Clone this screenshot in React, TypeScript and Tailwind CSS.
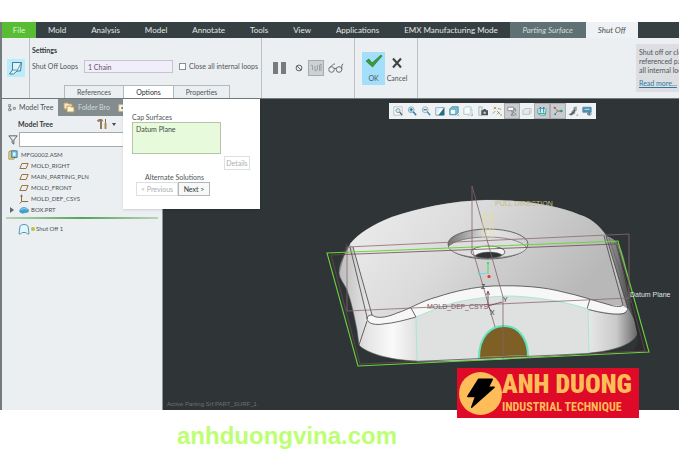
import { useState } from "react";
import type { ReactNode } from "react";
import clsx from "clsx";

const menus = ["Mold", "Analysis", "Model", "Annotate", "Tools", "View", "Applications", "EMX Manufacturing Mode"];
const panels = ["References", "Options", "Properties"];

type Node = { name: string; kind: "plane" | "csys" | "part"; expandable?: boolean };

const nodes: Node[] = [
  { name: "MOLD_RIGHT", kind: "plane" },
  { name: "MAIN_PARTING_PLN", kind: "plane" },
  { name: "MOLD_FRONT", kind: "plane" },
  { name: "MOLD_DEF_CSYS", kind: "csys" },
  { name: "BOX.PRT", kind: "part", expandable: true },
];

function Icon({ children, className = "size-3" }: { children: ReactNode; className?: string }) {
  return (
    <svg viewBox="0 0 12 12" className={clsx("shrink-0", className)} fill="none" stroke="#5b6266" strokeWidth="1" aria-hidden="true">
      {children}
    </svg>
  );
}

function NodeIcon({ kind }: { kind: Node["kind"] }) {
  if (kind === "plane") {
    return <Icon className="size-2.5"><path d="M3.500 3h7.500l-2.500 6H1z" stroke="#9b7440" strokeWidth="1.200" /></Icon>;
  }
  if (kind === "csys") {
    return <Icon className="size-2.5"><path d="M3 1v8h8M3 9L1 11.500M3 1L2 3M3 1l1 2" stroke="#8d6a3c" strokeWidth="1.200" /></Icon>;
  }
  return (
    <Icon className="size-2.5">
      <path d="M1 6c1-2 3-3 5-3s4 1 5.500 3L11 8.500 4 10 1 8.500z" fill="#3fa3d1" stroke="#2b7fa8" strokeWidth=".6" />
      <path d="M2 6c2-2 6-2.500 8-.5" stroke="#a5dcf2" />
    </Icon>
  );
}

const more = <path d="M10 11.500h1.500V10z" fill="#333" stroke="none" />;

const viewTools: { label: string; pressed?: boolean; art: ReactNode }[] = [
  {
    label: "Refit",
    art: <><path d="M1 1h10v10H1z" fill="#f8f8f8" stroke="#b4bbbe" /><circle cx="6" cy="5.500" r="2.500" fill="#cfe6f0" stroke="#7f97a2" /><path d="M8 7.500l3 3.500" strokeWidth="1.500" /></>,
  },
  {
    label: "Zoom In",
    art: <><circle cx="5" cy="4.500" r="3.500" fill="#d5ebf5" stroke="#8ba3b0" /><path d="M3 4.500h4M5 2.500v4" stroke="#1d6d96" strokeWidth="1.300" /><path d="M7.500 7l3.500 4" stroke="#2f7ba3" strokeWidth="1.700" /></>,
  },
  {
    label: "Zoom Out",
    art: <><circle cx="5" cy="4.500" r="3.500" fill="#e2eff5" stroke="#93a7b0" /><path d="M3 4.500h4" stroke="#1d6d96" strokeWidth="1.300" /><path d="M7.500 7l3.500 4" stroke="#4a8bad" strokeWidth="1.700" /></>,
  },
  {
    label: "Repaint",
    art: <><path d="M1 2h10v9H1z" fill="#fff" stroke="#6f919b" /><path d="M11 2L4 11h7z" fill="#1f6d8e" stroke="none" /><path d="M1.500 10.500L7 2H1.500z" fill="#d5edf5" stroke="none" /></>,
  },
  {
    label: "Display Style",
    art: <><path d="M1 3.500L3.500 1H11v7l-2.500 2.500H1z" fill="#7cc0da" stroke="#3b86a4" /><path d="M1.500 4h6.500v6H1.500z" fill="#f6fcfd" stroke="#3b86a4" strokeWidth=".7" />{more}</>,
  },
  {
    label: "Saved Orientations",
    art: <><path d="M1 3l2-2h6.500v7l-2 2H1z" fill="#f4fafc" stroke="#a3bfca" /><path d="M8 4h3v7H6" stroke="#91bccd" strokeDasharray="1 1" />{more}</>,
  },
  {
    label: "View Manager",
    art: <><path d="M1 1h4v10H1z" fill="#e5eaec" stroke="#a9afb2" /><path d="M4 5h2l1-1.500h2L10 5h2v6H4z" fill="#4b5356" stroke="none" /><circle cx="8" cy="8" r="1.500" fill="#bcc7cb" stroke="none" /></>,
  },
  {
    label: "Datum Display Filters",
    art: <><path d="M2 1l3 3M5 1L2 4M7 3l4 1M1 9l3-3M6 6l4 4M6 10l3-3" stroke="#a1874f" />{more}</>,
  },
  {
    label: "Annotation Display",
    pressed: true,
    art: <><path d="M1 1.500h7v4H1z" fill="#fff" stroke="#7f8487" /><path d="M8 3.500h2v3M5 7h3l-3 4h4M9 8l2 3" stroke="#555b5e" strokeWidth=".8" /></>,
  },
  {
    label: "Section Display",
    art: <><path d="M1 5l3-2h7v5l-2 2H1z" fill="#e6e8e9" stroke="#b8bcbe" /><path d="M9 5v5" stroke="#b8bcbe" /></>,
  },
  {
    label: "Shut Off Display",
    pressed: true,
    art: <><path d="M1 3v6l3 2h6l1-8" fill="#d3f0f0" stroke="#4690a6" /><path d="M4 8V2M2.500 3.500L4 1.500l1.500 2M8 8V2M6.500 3.500L8 1.500l1.500 2" stroke="#1976a0" /><path d="M2 9h8" stroke="#25a46e" /></>,
  },
  {
    label: "Spin Center",
    pressed: true,
    art: <><path d="M2 1.500L5.500 6 2 10.500" stroke="#c45757" /><path d="M5.500 6H11" stroke="#249254" strokeWidth="1.200" /><circle cx="2" cy="2" r="1.200" fill="#bd4747" stroke="none" /><circle cx="10" cy="6" r="1.500" fill="#359961" stroke="none" /><circle cx="2.500" cy="10" r="1.200" fill="#3f8cb5" stroke="none" /></>,
  },
  {
    label: "Appearance",
    art: <><path d="M1 10l3-1 1-3 2-1V2l3-1v4L8 7v2l-4 2z" fill="#a1a6a9" stroke="#777d80" strokeWidth=".7" /><path d="M3 10.500l4-3 1-3" stroke="#44494b" strokeWidth="1.300" />{more}</>,
  },
  {
    label: "Graphics Window",
    art: <><path d="M1 1.500h10v6H1z" fill="#4793b2" stroke="#5f889a" /><path d="M3 4h6" stroke="#e0f3fa" /><path d="M6 9.500c1.500-2 4-2 5.500 0-1.500 2-4 2-5.500 0z" fill="#fff" stroke="#28617a" strokeWidth=".8" /><circle cx="8.700" cy="9.500" r="1" fill="#194a60" stroke="none" /></>,
  },
];

function MenuBar() {
  return (
    <nav className="flex h-4 items-stretch bg-[#363f41] text-[8px] leading-4 text-[#e3e8e8]">
      <button className="w-[34px] bg-[#58bd35] text-[#dcf8c8]">File</button>
      <div className="flex gap-px">
        {menus.map((m) => (
          <button key={m} className="px-3 whitespace-nowrap">{m}</button>
        ))}
      </div>
      <button className="w-[76px] bg-[#5f7174] whitespace-nowrap text-[#d3dddd] italic">Parting Surface</button>
      <button className="w-[52px] bg-[#eff2f4] whitespace-nowrap text-[#4c5154] italic">Shut Off</button>
    </nav>
  );
}

function Ribbon({ panel, setPanel }: { panel: string; setPanel: (p: string) => void }) {
  const [closeAll, setCloseAll] = useState(false);
  return (
    <header className="flex overflow-hidden border-b border-[#73797b] bg-[#eceff2]">
      <div className="flex w-[28px] shrink-0 items-center justify-center border-r border-[#bcc1c4]">
        <button aria-label="Shut Off" className="flex size-[18px] items-center justify-center bg-[#b9edfa]">
          <svg viewBox="0 0 16 16" className="size-4" fill="none" stroke="#407f9b" aria-hidden="true">
            <path d="M4.500 2.500h9l-1 8.500H9l-3.500 3H1.500L4.500 10z" fill="#dff4fa" />
            <path d="M4.500 2.500V10H9M9 11L13 3" strokeWidth=".8" />
          </svg>
        </button>
      </div>

      <div className="flex w-[232px] shrink-0 flex-col border-r border-[#bcc1c4] pt-1.5">
        <h2 className="pl-0.5 text-[7px] leading-3 font-bold text-[#33383b]">Settings</h2>
        <div className="mt-1 flex h-[13px] items-center pl-0.5 text-[7px]">
          <label htmlFor="loops" className="w-[52px] whitespace-nowrap">Shut Off Loops</label>
          <input id="loops" defaultValue="1 Chain" className="h-[13px] w-[89px] border border-[#c4c5d0] bg-[#f2edfb] px-[3px] text-[#5d5268]" />
          <label className="ml-1.5 flex items-center gap-[3px] whitespace-nowrap">
            <input
              type="checkbox"
              checked={closeAll}
              onChange={(e) => setCloseAll(e.target.checked)}
              className={clsx("size-[7px] appearance-none border border-[#8a9093]", closeAll ? "bg-[#4a9fc1]" : "bg-white")}
            />
            Close all internal loops
          </label>
        </div>
        <div className="mt-3 ml-[34px] flex h-[13px] text-[7px] leading-3">
          {panels.map((p) => (
            <button
              key={p}
              onClick={() => setPanel(panel === p ? "" : p)}
              className={clsx(
                "border-t border-r border-[#b4b9bc] first:w-[60px] first:border-l",
                p === "Options" ? "w-[50px]" : "w-[56px]",
                panel === p ? "bg-white text-[#2c3033]" : "bg-[#eceff2]"
              )}
            >
              {p}
            </button>
          ))}
        </div>
      </div>

      <div className="flex w-[93px] shrink-0 items-center justify-center gap-1 border-r border-[#bcc1c4]">
        <button aria-label="Pause" className="flex gap-[3px]">
          <span className="h-3 w-[5px] bg-[#777b7d]" />
          <span className="h-3 w-[5px] bg-[#777b7d]" />
        </button>
        <button aria-label="No preview" className="ml-1">
          <Icon className="size-2.5"><circle cx="6" cy="6" r="3.500" strokeWidth="1.200" /><path d="M3.500 3.500l5 5" strokeWidth="1.200" /></Icon>
        </button>
        <button aria-label="Attached preview" className="flex size-4 items-center justify-center border border-[#a5aaac] bg-[#ced1d3]">
          <Icon><path d="M1 3.500h1.500V8M5 4v5l2-1M7.500 3v5M9.500 9V3l1.500-1v7" stroke="#909698" strokeWidth=".8" /></Icon>
        </button>
        <button aria-label="Verify">
          <svg viewBox="0 0 16 10" className="h-2.5 w-4" fill="none" stroke="#6b7174" aria-hidden="true">
            <circle cx="3.500" cy="6.500" r="2.800" /><circle cx="11" cy="6.500" r="2.800" />
            <path d="M6 5.500h2.500M1.500 5l4-4H7M13.800 6.500V2l1.500-1" />
          </svg>
        </button>
      </div>

      <div className="flex w-[63px] shrink-0 items-center border-r border-[#bcc1c4] pl-[7px] text-[7px] leading-[10px]">
        <button className="flex h-[33px] w-[23px] flex-col items-center justify-end bg-[#a3defb] pb-0.5">
          <svg viewBox="0 0 18 16" className="h-4 w-[18px]" aria-hidden="true">
            <path d="M1 8l3-2 3 4 9-8 1 1L7.500 14z" fill="#3d9940" stroke="#277c2e" strokeWidth=".7" />
          </svg>
          <span className="mt-1">OK</span>
        </button>
        <button className="flex h-[33px] w-[24px] flex-col items-center justify-end pb-0.5">
          <Icon><path d="M2 1.500l8 9M10 1.500l-8 9" stroke="#3d4244" strokeWidth="2" /></Icon>
          <span className="mt-1">Cancel</span>
        </button>
      </div>

      <aside className="my-auto ml-auto w-[43px] shrink-0 overflow-hidden bg-[#dcdee1] py-1 pl-[3px] text-[7px] leading-[9px] whitespace-nowrap">
        <p>Shut off or close</p>
        <p>referenced part</p>
        <p>all internal loops</p>
        <a href="#help" className="mt-1 block text-[#3276a0] underline">Read more...</a>
      </aside>
    </header>
  );
}

function ModelTree() {
  return (
    <section className="w-[161px] shrink-0 border-r border-[#8d9496] bg-[#ebeff1] text-[7px]">
      <div className="flex h-[17px] items-stretch bg-[#838c8f]">
        <button className="flex w-14 items-center gap-[3px] bg-[#ebeff1] pl-1.5 whitespace-nowrap">
          <Icon className="h-3 w-2"><path d="M1 1h3v3H1zM1 7h3v3H1zM2.500 4v3M8 5h3v3H8zM4 8.500h2" /></Icon>
          Model Tree
        </button>
        <button className="flex items-center gap-[3px] pl-[5px] whitespace-nowrap text-[#d5dadb]">
          <Icon><path d="M1 1h4l1 1h3v5H1z" fill="#f8ead0" stroke="#c59a51" /><path d="M4 4h3l1 1h3v5H4z" fill="#fdf5df" stroke="#c59a51" /></Icon>
          Folder Bro
        </button>
        <span className="ml-2 flex items-center">
          <Icon className="size-2.5"><path d="M1 2h9v8H1z" fill="#f5f8f8" stroke="#dbb76c" /><path d="M4 6h4" stroke="#2a7796" strokeWidth="2" /></Icon>
        </span>
      </div>

      <div className="flex h-4 items-center pl-4">
        <h2 className="w-[78px] font-bold text-[#33383b]">Model Tree</h2>
        <Icon>
          <path d="M1 2.500L3 1h3l1.500 2.500L6 3v8H4V3.500L2 4z" fill="#927a5a" stroke="none" />
          <path d="M9.500 1v4" stroke="#6d7477" />
          <path d="M9.500 5v6" stroke="#b08a4c" strokeWidth="2" />
        </Icon>
        <span className="ml-1 border-x-2 border-t-[3px] border-x-transparent border-t-[#44494b]" />
        <span className="ml-2 size-2 border border-dashed border-[#8a9093]" />
      </div>

      <div className="flex h-[15px] items-center pl-1.5">
        <Icon className="size-2.5"><path d="M1 1h10L7 6v5L5 9.500V6z" strokeWidth="1.200" /></Icon>
        <input aria-label="Filter" className="ml-[1px] h-[15px] min-w-0 flex-1 border border-[#a6abad] bg-white px-1" />
      </div>

      <ul className="pt-0.5 text-[6px] leading-[11px] text-[#4c5154]">
        <li className="flex items-center gap-[3px] pl-1.5">
          <Icon className="size-2.5"><path d="M1 2l2-1h6v8l-2 2H1z" fill="#ead493" stroke="#ab8a45" /><path d="M4 1h7v8H4z" fill="#7cc2dd" stroke="#357d9c" /><path d="M6 3h3v4H6z" fill="#e2f5fb" stroke="none" /></Icon>
          MFG0002.ASM
        </li>
        {nodes.map((n) => (
          <li key={n.name} className="flex items-center gap-0.5 pl-2">
            <span className="flex w-[7px] shrink-0">
              {n.expandable && <span className="border-y-[3px] border-l-4 border-y-transparent border-l-[#63696c]" />}
            </span>
            <NodeIcon kind={n.kind} />
            {n.name}
          </li>
        ))}
      </ul>
      <div className="mx-1 mt-0.5 h-0.5 bg-linear-to-r from-[#b8d4b8] via-[#55a257] to-[#b8d4b8]" />
      <div className="mt-1 flex items-center gap-px pl-4 text-[6px] leading-3 text-[#4c5154]">
        <Icon><path d="M2 3c2-2 6-2 8 0l1 8H9.500L8 9.500H4L2.500 11H1z" fill="#e2f5fb" stroke="#539ab8" /></Icon>
        <span className="size-1 rounded-full bg-[#c6bd3b]" />
        Shut Off 1
      </div>
    </section>
  );
}

function OptionsPanel() {
  return (
    <div className="absolute top-0 left-[121px] h-[110px] w-[137px] bg-white pt-3.5 pl-[9px] text-[7px] leading-[9px] shadow-sm">
      <label htmlFor="caps" className="block">Cap Surfaces</label>
      <textarea id="caps" defaultValue="Datum Plane" className="block h-8 w-[89px] resize-none border border-[#b5c6a8] bg-[#e7fbdc] px-[3px] py-0.5 text-[#41493d]" />
      <button className="mt-0.5 ml-[92px] block h-3.5 w-[26px] border border-[#dde0e1] text-[#a9adaf]">Details</button>
      <p className="mt-[3px] pl-[13px]">Alternate Solutions</p>
      <div className="ml-1 flex h-3.5">
        <button className="w-[42px] border border-[#dde0e1] whitespace-nowrap text-[#a9adaf]">&lt; Previous</button>
        <button className="w-[32px] border border-[#b2b7b9] bg-[#f7f8f8] whitespace-nowrap text-[#33383b]">Next &gt;</button>
      </div>
    </div>
  );
}

function Scene() {
  return (
    <svg viewBox="163 99 516 311" className="block h-auto w-full bg-[#2f3536]" role="img" aria-label="Mold part with shut off surface">
      <defs>
        <linearGradient id="top" x1="0" y1="0" x2="1" y2=".35">
          <stop offset="0" stopColor="#eeeeee" />
          <stop offset=".45" stopColor="#dbdbdb" />
          <stop offset="1" stopColor="#b8b8b8" />
        </linearGradient>
        <linearGradient id="side" x1="0" x2="1">
          <stop offset="0" stopColor="#bcbcbc" />
          <stop offset=".1" stopColor="#e6e6e6" />
          <stop offset=".18" stopColor="#fafafa" />
          <stop offset=".27" stopColor="#dcdcdc" />
          <stop offset=".84" stopColor="#e6e6e6" />
          <stop offset=".93" stopColor="#cacaca" />
          <stop offset="1" stopColor="#696969" />
        </linearGradient>
        <linearGradient id="bore" x1="0" x2="1">
          <stop offset="0" stopColor="#757575" />
          <stop offset=".5" stopColor="#e6e6e6" />
          <stop offset="1" stopColor="#d0d0d0" />
        </linearGradient>
        <linearGradient id="edge" x1="0" x2="1">
          <stop offset="0" stopColor="#a0a0a0" />
          <stop offset="1" stopColor="#343637" />
        </linearGradient>
      </defs>

      {/* body */}
      <path
        d="M350 244C343 257 339 265 339 273C340 280 344 283 347 290C352 304 354 315 357 330L359 345C366 353 389 360 417 361C440 362 470 361 500 359L590 353C612 351 633 345 637 334C638 328 631 303 628 297L606 235C599 225 590 218 580 215C556 205 522 200 487 200C450 201 419 208 392 217C372 225 359 233 350 244Z"
        fill="url(#side)"
        stroke="#5c5c5c"
        strokeWidth=".6"
      />
      <path
        d="M350 244C359 233 372 225 392 217C419 208 450 201 487 200C522 200 556 205 580 215C590 218 599 225 606 236L623 305C621 307 614 306 610 305C595 301 578 295 563 292C545 287 520 285 493 286C474 287 455 291 437 297C425 301 405 311 397 313C388 317 375 319 372 315L353 247Z"
        fill="url(#top)"
      />
      <path d="M606 236C618 239 621 248 624 258L634 306L637 325L627 306Z" fill="url(#edge)" />
      <path d="M616 241l32 110-18 2c8-5 9-14 6-25z" fill="#292d2e" />

      {/* front rim */}
      <path
        d="M372 315C378 320 390 316 397 313C410 309 421 301 437 297C455 291 474 287 493 286C520 285 545 287 563 292C578 295 595 301 610 305L623 306L628 309C627 314 618 314 610 313L587 309C565 302 546 298 513 296C494 296 475 299 453 303C439 307 428 313 415 317C401 322 382 326 370 323C366 320 367 317 372 315Z"
        fill="#f7f7f7"
      />
      <path
        d="M353 247L372 315C378 320 390 316 397 313C410 309 421 301 437 297C455 291 474 287 493 286C520 285 545 287 563 292C578 295 595 301 610 305C616 307 622 307 623 305L604 236M350 247L367 317C366 325 378 325 383 324C395 323 405 320 416 317L411 308M367 321L359 345M372 315C368 315 367 317 367 319M590 299L587 309C600 313 620 316 625 313L628 309L606 236"
        fill="none"
        stroke="#424242"
        strokeWidth=".8"
      />
      <path d="M609 238L631 303M347 244L339 273" stroke="#5c5c5c" strokeWidth=".6" />

      {/* shut off face */}
      <path d="M416 317C428 312 440 307 453 303C475 298 494 296 513 296C546 298 565 302 588 309L589 353L500 359L417 361Z" fill="#dfe1e1" stroke="#9fe8d4" strokeWidth=".9" />
      <path d="M479 358C479 337 490 326 504 326C518 326 528 338 528 356Z" fill="#7e5f25" stroke="#63e3be" strokeWidth="2" />
      <path d="M480 358L527 356" stroke="#96652c" strokeWidth="1.500" />

      {/* counterbore */}
      <ellipse cx="488" cy="244" rx="40" ry="15" fill="url(#bore)" stroke="#4a4a4a" strokeWidth=".8" />
      <path d="M448 247C458 234 517 233 527 248C520 261 456 262 448 247Z" fill="#dedede" stroke="#555" strokeWidth=".6" />
      <ellipse cx="488" cy="252" rx="17" ry="6" fill="#f2f2f2" stroke="#4a4a4a" strokeWidth=".8" />
      <path d="M475 256C479 251 498 251 502 255C497 259 480 259 475 256Z" fill="#303334" stroke="#666" strokeWidth=".5" />

      {/* datum planes */}
      <g fill="none" strokeWidth=".8">
        <path d="M327 253L618 241L649 352L358 366Z" stroke="#6bd43f" strokeWidth="1.100" />
        <path d="M331 255L616 244L645 351L360 364Z" stroke="#6b4b4c" />
        <path d="M347 247L629 234V298L347 311Z" stroke="#8c6a70" />
        <path d="M472 186V248L495 327M472 186L503 297V359" stroke="#80646a" />
      </g>

      <g stroke="#e2dda5" fill="none" strokeWidth=".8">
        <path d="M483 218V238M486 218V238M482 218L484.500 211L487 218ZM490 218V238M493 218V238M489 218L491.500 211L494 218Z" />
      </g>
      <path d="M488 263V274" stroke="#47da5c" />
      <circle cx="488" cy="263" r="1.200" fill="#47da5c" />
      <path d="M477 273.500H486" stroke="#6bdde6" />
      <circle cx="489" cy="276.500" r="1.600" fill="#df3535" />
      <path d="M488 292V306M488 306L502 302M488 306L491 311M486.500 295L488 291L489.500 295" stroke="#6f3e46" strokeWidth=".8" fill="none" />

      <g fontFamily="Liberation Sans, Arial, sans-serif" fontSize="7">
        <text x="495" y="206" fill="#c0bc84">PULL DIRECTION</text>
        <text x="427" y="309" fill="#7b565e">MOLD_DEF_CSYS</text>
        <text x="481" y="289" fill="#33383b">Z</text>
        <text x="503" y="302" fill="#33383b">Y</text>
        <text x="490" y="315" fill="#33383b">X</text>
        <text x="630" y="297" fill="#dfe3e3">Datum Plane</text>
      </g>
      <text x="167" y="406" fill="#6c7375" fontFamily="Liberation Sans, Arial, sans-serif" fontSize="6">Active Parting Srf:PART_SURF_1</text>
    </svg>
  );
}

function ViewToolbar() {
  return (
    <div className="absolute top-1 right-[83px] flex h-4 w-[207px] items-stretch bg-[#eff2f4] px-0.5">
      {viewTools.map((t) => (
        <button
          key={t.label}
          aria-label={t.label}
          className={clsx("flex flex-1 items-center justify-center", t.pressed && "border border-[#a9aeb1] bg-[#c8cccf]")}
        >
          <Icon className="size-2.5">{t.art}</Icon>
        </button>
      ))}
    </div>
  );
}

function Badge() {
  return (
    <div className="absolute right-10 -bottom-2 flex h-[50px] w-[182px] items-center bg-[#df0a27] pl-0.5 font-['Liberation_Sans_Narrow','Roboto_Condensed','DejaVu_Sans_Condensed',sans-serif] whitespace-nowrap text-[#ffbd59]">
      <svg viewBox="0 0 44 44" className="size-[43px] shrink-0" aria-hidden="true">
        <circle cx="22" cy="22" r="22" fill="#ffbd59" />
        <path d="M20 7.500h14l-4 8h6L13 36l4-11H9z" fill="#000" stroke="#000" strokeWidth="1.500" strokeLinejoin="round" />
      </svg>
      <div className="pb-1">
        <p className="text-[26px] leading-[31px] font-black">ANH DUONG</p>
        <p className="text-[12px] leading-[14px] font-bold">INDUSTRIAL TECHNIQUE</p>
      </div>
    </div>
  );
}

export default function App() {
  const [panel, setPanel] = useState("Options");
  return (
    <main className="min-h-screen bg-white pt-[22px] font-[Lato,'Open_Sans',sans-serif] text-[#4f5457]">
      <div className="relative mr-px border-l-2 border-[#747b7d]">
        <MenuBar />
        <Ribbon panel={panel} setPanel={setPanel} />
        <div className="relative flex">
          <ModelTree />
          <div className="relative min-w-0 flex-1">
            <Scene />
            <ViewToolbar />
          </div>
          {panel === "Options" && <OptionsPanel />}
        </div>
        <Badge />
      </div>
      <footer className="pt-3 pl-[177px] font-['Liberation_Sans',Arial,sans-serif] text-[24px] leading-7 font-bold text-[#bdff72]">
        anhduongvina.com
      </footer>
    </main>
  );
}
